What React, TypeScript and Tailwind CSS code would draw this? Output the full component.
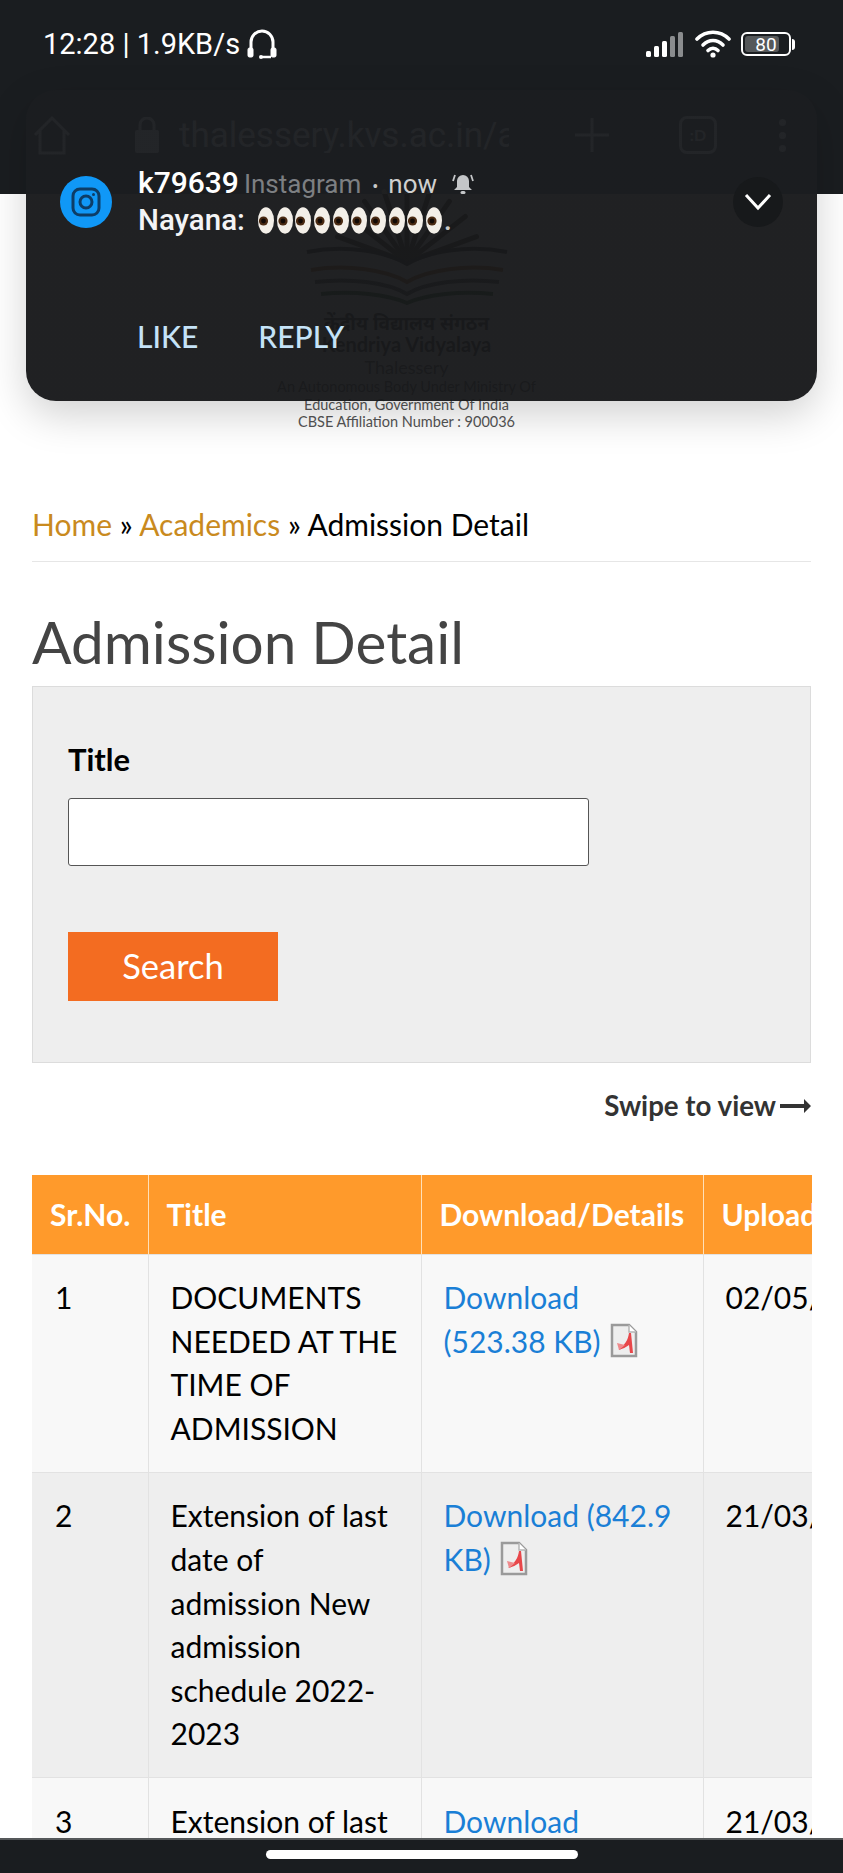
import React from 'react';

const rows = [
  { no: '1', title: 'DOCUMENTS NEEDED AT THE TIME OF ADMISSION', link: 'Download (523.38 KB)', date: '02/05/2022', bg: 'bg-[#f8f8f8]' },
  { no: '2', title: 'Extension of last date of admission New admission schedule 2022-2023', link: 'Download (842.9 KB)', date: '21/03/2022', bg: 'bg-[#eeeeee]' },
  { no: '3', title: 'Extension of last date of admission', link: 'Download (1023.44 KB)', date: '21/03/2022', bg: 'bg-[#f8f8f8]' },
];

const PdfIcon = () => (
  <svg width="28" height="35" viewBox="0 0 28 35" className="inline-block align-[-5px] ml-[9px]">
    <path d="M2 2h17l7 7v24H2z" fill="#eeeeee" stroke="#9a9a9a" strokeWidth="2.500" />
    <path d="M19 2v7h7" fill="#fff" stroke="#b5b5b5" strokeWidth="1.500" />
    <path d="M19 10c-1 7-4 12-11 17 5-1 8-3 11-5l1 8h3l-2-20z" fill="#e8474a" />
    <path d="M7 20l8 2-6 5z" fill="#ef8a8c" />
  </svg>
);

const Eyes = () => (
  <span className="inline-flex items-center h-[26px] align-[-5px]">
    {Array.from({ length: 10 }).map((_, i) => (
      <svg key={i} width="18.7" height="27" viewBox="0 0 18.7 27">
        <ellipse cx="9" cy="13.5" rx="8" ry="13.2" fill="#f3efe8" />
        <circle cx={i % 2 === 0 ? 6.5 : 7} cy="14" r="4.6" fill="#4a2a12" />
        <circle cx={i % 2 === 0 ? 6.5 : 7} cy="14" r="2.4" fill="#120a05" />
      </svg>
    ))}
  </span>
);

const KvLogo = () => (
  <svg width="240" height="125" viewBox="0 0 240 125" fill="none">
    {[-70, -52, -35, -18, 0, 18, 35, 52, 70].map((a) => (
      <path key={a} d="M120 82L120 8" stroke="#4a4030" strokeWidth="5" strokeLinecap="round" transform={`rotate(${a} 120 82)`} />
    ))}
    <path d="M20 72c40-8 80 0 100 12 20-12 60-20 100-12" stroke="#333" strokeWidth="4" />
    <path d="M24 90c36-6 76 0 96 12 20-12 60-18 96-12" stroke="#b5651d" strokeWidth="4" />
    <path d="M28 102c34-4 72 0 92 12 20-12 58-16 92-12" stroke="#555" strokeWidth="4" />
    <path d="M34 114c32-3 66 0 86 9 20-9 54-12 86-9" stroke="#2d6a30" strokeWidth="4" />
  </svg>
);

export default function App() {
  return (
    <div className="relative h-[1873px] w-[843px] overflow-hidden bg-white font-['Lato',sans-serif] text-black">
      <header className="h-[194px] bg-[#1a1d20]">
        <div className="flex h-[90px] items-center justify-between pl-[43px] pr-[48px] pb-[2px] font-['Roboto',sans-serif] text-white">
          <div className="flex items-center gap-[6px] text-[29px] leading-none">
            <span>12:28 | 1.9KB/s</span>
            <svg width="32" height="30" viewBox="0 0 32 30" fill="none" stroke="#fff" strokeWidth="3">
              <path d="M5 21V13a11 11 0 0 1 22 0v8" />
              <rect x="2" y="19" width="5" height="9" rx="1.500" fill="#fff" strokeWidth="1" />
              <rect x="25" y="19" width="5" height="9" rx="1.500" fill="#fff" strokeWidth="1" />
              <path d="M16 28h9" strokeWidth="2.500" />
              <circle cx="15" cy="28" r="2" fill="#fff" stroke="none" />
            </svg>
          </div>
          <div className="flex items-center gap-[10px]">
            <svg width="39" height="25" viewBox="0 0 39 25">
              <rect x="0" y="19" width="5" height="6" rx="1.500" fill="#fff" />
              <rect x="8" y="14" width="5" height="11" rx="1.500" fill="#fff" />
              <rect x="16" y="9" width="5" height="16" rx="1.500" fill="#fff" />
              <rect x="24" y="4" width="5" height="21" rx="1.500" fill="#8a8c8e" />
              <rect x="32" y="0" width="5" height="25" rx="1.500" fill="#8a8c8e" />
            </svg>
            <svg width="36" height="28" viewBox="0 0 36 28" fill="none" stroke="#fff" strokeWidth="3.600" strokeLinecap="round">
              <path d="M2 9c9-9 23-9 32 0" />
              <path d="M8 15c6-6 14-6 20 0" />
              <path d="M13 20.500c3-3 7-3 10 0" />
              <circle cx="18" cy="25" r="2.600" fill="#fff" stroke="none" />
            </svg>
            <div className="flex items-center">
              <div className="relative flex h-[24px] w-[50px] items-center rounded-[6px] border-2 border-white p-[2px]">
                <div className="h-full w-[80%] rounded-[3px] bg-[#55585a]" />
                <span className="absolute inset-0 flex items-center justify-center text-[19px] leading-none text-white">80</span>
              </div>
              <div className="ml-[1px] h-[11px] w-[3px] rounded-r-sm bg-white" />
            </div>
          </div>
        </div>
        <div className="flex h-[104px] items-center pb-[14px] text-[#6a6c6f]">
          <svg className="ml-[33px]" width="38" height="40" viewBox="0 0 38 40" fill="none" stroke="currentColor" strokeWidth="3">
            <path d="M2 20L19 3l17 17M7 16v22h24V16" />
          </svg>
          <svg className="ml-[63px]" width="26" height="36" viewBox="0 0 26 36" fill="currentColor">
            <rect x="1" y="13" width="24" height="23" rx="2" />
            <path d="M6 13V8a7 7 0 0 1 14 0v5" fill="none" stroke="currentColor" strokeWidth="3" />
          </svg>
          <div className="ml-[19px] w-[330px] overflow-hidden whitespace-nowrap font-['Roboto',sans-serif] text-[35px] leading-none">thalessery.kvs.ac.in/admission</div>
          <svg className="ml-[66px]" width="34" height="34" viewBox="0 0 34 34" stroke="currentColor" strokeWidth="3">
            <path d="M17 0v34M0 17h34" />
          </svg>
          <div className="ml-[70px] flex h-[38px] w-[38px] items-center justify-center rounded-[8px] border-[3px] border-current text-[16px] font-bold">:D</div>
          <div className="ml-[62px] flex flex-col gap-[6px]">
            <div className="h-[7px] w-[7px] rounded-full bg-current" />
            <div className="h-[7px] w-[7px] rounded-full bg-current" />
            <div className="h-[7px] w-[7px] rounded-full bg-current" />
          </div>
        </div>
      </header>

      <section className="-mt-[14px] flex flex-col items-center pr-[30px] text-center text-[#555]">
        <KvLogo />
        <p className="mt-[7px] font-['Noto_Sans','Liberation_Sans',sans-serif] text-[19px] font-bold leading-[22px] text-[#333]">केंद्रीय विद्यालय संगठन</p>
        <p className="text-[20px] font-bold leading-[21px] text-[#333]">Kendriya Vidyalaya</p>
        <p className="mt-[1px] text-[18px] leading-[22px]">Thalessery</p>
        <p className="text-[14.5px] leading-[18px]">An Autonomous Body Under Ministry Of</p>
        <p className="text-[14.5px] leading-[17px]">Education, Government Of India</p>
        <p className="text-[14.5px] leading-[18px]">CBSE Affiliation Number : 900036</p>
      </section>

      <main className="px-[32px]">
        <nav className="mt-[71px] border-b border-[#e6e6e6] pb-[15px] text-[30px] leading-[44px]">
          <a className="text-[#c98a1e]">Home</a> » <a className="text-[#c98a1e]">Academics</a> » Admission Detail
        </nav>
        <h1 className="mt-[44px] text-[58.5px] font-normal leading-[70px] text-[#444]">Admission Detail</h1>
        <form className="mt-[10px] h-[377px] border border-[#dcdcdc] bg-[#eeeeee] pl-[35px] pt-[52px]">
          <label className="block text-[31px] font-bold leading-[40px]">Title</label>
          <input className="mt-[19px] block h-[68px] w-[521px] rounded-[3px] border border-[#555] bg-white" />
          <button type="button" className="mt-[66px] h-[69px] w-[210px] bg-[#f36c21] text-[34.5px] leading-none text-white">Search</button>
        </form>
        <div className="mt-[25px] flex items-center justify-end gap-[4px] text-[27.7px] font-bold leading-[36px] text-[#333]">
          <span>Swipe to view</span>
          <svg width="31" height="16" viewBox="0 0 31 16" fill="#333">
            <path d="M0 6h24V1l7 7-7 7v-5H0z" />
          </svg>
        </div>
        <div className="mt-[51px] w-[780px] overflow-hidden">
          <table className="w-[1000px] table-fixed border-collapse">
            <colgroup>
              <col className="w-[116px]" />
              <col className="w-[273px]" />
              <col className="w-[282px]" />
              <col className="w-[329px]" />
            </colgroup>
            <thead>
              <tr className="h-[79px] bg-[#ff9a2b] text-left text-[30px] font-bold text-white">
                <th className="border-r border-[#ffe0b8] pl-[18px]">Sr.No.</th>
                <th className="border-r border-[#ffe0b8] pl-[18px]">Title</th>
                <th className="border-r border-[#ffe0b8] pl-[18px] whitespace-nowrap">Download/Details</th>
                <th className="pl-[18px]">Upload Date</th>
              </tr>
            </thead>
            <tbody className="text-[30px] leading-[43.6px]">
              {rows.map((r) => (
                <tr key={r.no} className={`${r.bg} border-t border-[#e2e2e2] align-top`}>
                  <td className="border-r border-[#e2e2e2] pl-[23px] pr-[10px] py-[21.5px]">{r.no}</td>
                  <td className="border-r border-[#e2e2e2] pl-[22px] pr-[22px] py-[21.5px]">{r.title}</td>
                  <td className="border-r border-[#e2e2e2] pl-[22px] pr-[22px] py-[21.5px] text-[#1a7fd6]">
                    {r.link}
                    <PdfIcon />
                  </td>
                  <td className="pl-[22px] py-[21.5px]">{r.date}</td>
                </tr>
              ))}
            </tbody>
          </table>
        </div>
      </main>

      {/* heads-up notification, lies over the browser page */}
      <aside className="absolute left-[26px] top-[90px] h-[311px] w-[791px] rounded-[30px] bg-[linear-gradient(to_bottom,rgba(27,29,32,0.9)_104px,rgba(23,24,26,0.96)_104px)] shadow-[0_14px_40px_rgba(0,0,0,0.18)]">
        <div className="absolute left-[34px] top-[86px] flex h-[52px] w-[52px] items-center justify-center rounded-full bg-[#1098f7]">
          <svg width="30" height="30" viewBox="0 0 30 30" fill="none" stroke="#0d3d66" strokeWidth="3">
            <rect x="2" y="2" width="26" height="26" rx="7" />
            <circle cx="15" cy="15" r="6" />
            <circle cx="22.500" cy="7.500" r="1.500" fill="#0d3d66" stroke="none" />
          </svg>
        </div>
        <div className="absolute left-[112px] top-[74px] flex items-baseline whitespace-nowrap font-['Roboto',sans-serif]">
          <span className="text-[30px] font-medium leading-[38px] text-white">k79639</span>
          <span className="ml-[5px] text-[26px] text-[#7d7f82]">Instagram</span>
          <span className="ml-[11px] text-[18px] text-[#c8c8c8]">•</span>
          <span className="ml-[10px] text-[26px] text-[#d0d0d0]">now</span>
          <svg className="ml-[14px] self-center" width="24" height="24" viewBox="0 0 24 24" fill="#c4c6c8">
            <path d="M12 3a6 6 0 0 1 6 6v6l3 3H3l3-3V9a6 6 0 0 1 6-6z" />
            <rect x="9.500" y="19" width="5" height="3" rx="1.500" />
            <path d="M4 3L2 9M20 3l2 6" fill="none" stroke="#c4c6c8" strokeWidth="1.800" />
          </svg>
        </div>
        <div className="absolute left-[112px] top-[112px] flex items-center whitespace-nowrap font-['Roboto',sans-serif] text-[29.500px] font-medium leading-[36px] text-[#f3f4f6]">
          <span className="mr-[12px]">Nayana:</span>
          <Eyes />
          <span className="text-[#c8c8c8]">.</span>
        </div>
        <div className="absolute right-[34px] top-[87px] flex h-[50px] w-[50px] items-center justify-center rounded-full bg-[#17191b]">
          <svg width="28" height="18" viewBox="0 0 28 18" fill="none" stroke="#fff" strokeWidth="3">
            <path d="M2 2l12 13L26 2" />
          </svg>
        </div>
        <div className="absolute left-[111px] top-[226px] flex gap-[60px] text-[30px] font-medium leading-[40px] text-[#c5e3f8]">
          <span>LIKE</span>
          <span>REPLY</span>
        </div>
      </aside>

      <footer className="absolute bottom-0 left-0 flex h-[35px] w-full justify-center border-t-2 border-[#55585a] bg-[#1a1d20] pt-[10px]">
        <div className="h-[9px] w-[312px] rounded-full bg-white" />
      </footer>
    </div>
  );
}
